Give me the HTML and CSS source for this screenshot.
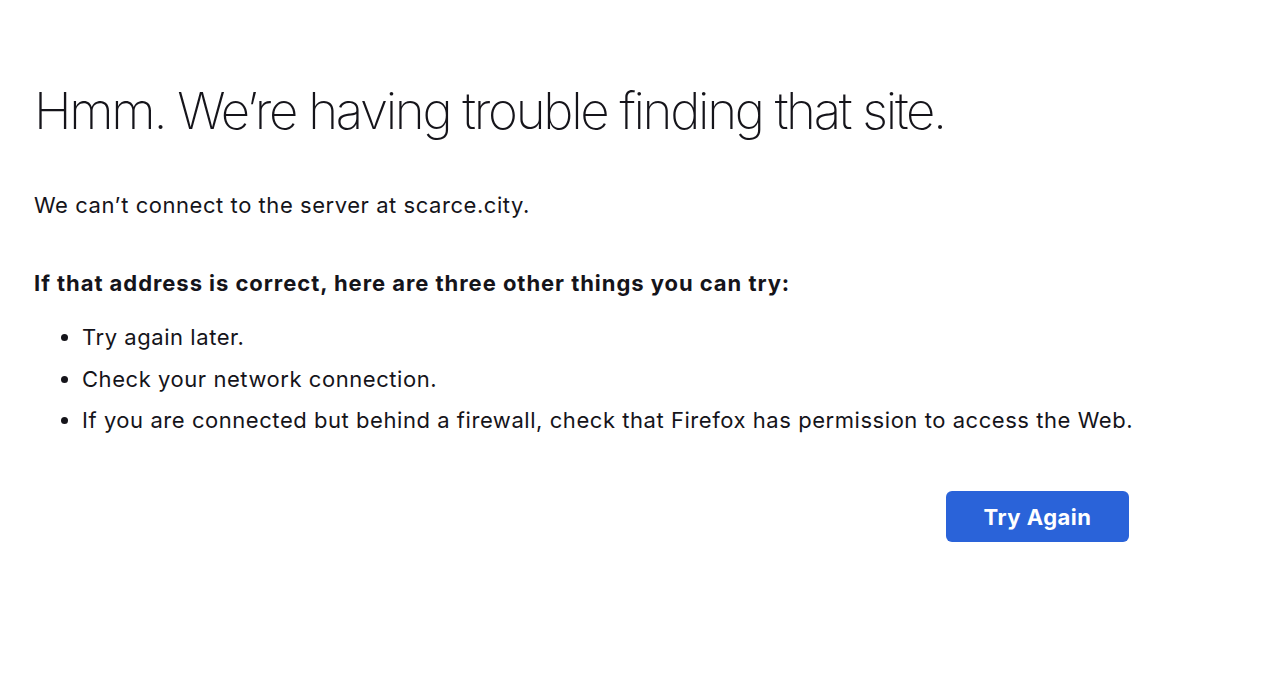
FILE: index.html
```html
<!DOCTYPE html>
<html lang="en">
<head>
<meta charset="utf-8">
<title>Problem loading page</title>
<link rel="stylesheet" href="styles.css">
</head>
<body>
<main class="container">
  <h1 class="title">Hmm. We’re having trouble finding that site.</h1>
  <p class="desc">We can’t connect to the server at scarce.city.</p>
  <p class="tips-head">If that address is correct, here are three other things you can try:</p>
  <ul class="tips">
    <li>Try again later.</li>
    <li>Check your network connection.</li>
    <li>If you are connected but behind a firewall, check that Firefox has permission to access the Web.</li>
  </ul>
  <div class="actions">
    <button class="btn">Try Again</button>
  </div>
</main>
</body>
</html>
```
FILE: styles.css
```css
html, body {
  margin: 0;
  padding: 0;
  background: #ffffff;
}
body {
  font-family: Inter, "Noto Sans", "Liberation Sans", sans-serif;
  color: #15141a;
}
.container {
  width: 1095px;
  padding: 74.5px 0 0 34px;
}
.title {
  margin: 0;
  font-size: 51px;
  font-weight: 200;
  letter-spacing: -2.3px;
  line-height: 72px;
  white-space: nowrap;
}
.desc {
  margin: 43.5px 0 0;
  font-size: 22px;
  letter-spacing: 0.55px;
  line-height: 30px;
}
.tips-head {
  margin: 48px 0 0;
  font-size: 22px;
  font-weight: 700;
  letter-spacing: 0.95px;
  line-height: 30px;
}
.tips {
  margin: 24px 0 0;
  padding-left: 48px;
  font-size: 22px;
  letter-spacing: 0.55px;
  line-height: 30px;
  white-space: nowrap;
}
.tips li {
  margin-bottom: 11.5px;
}
.tips li:last-child {
  margin-bottom: 0;
}
.actions {
  display: flex;
  justify-content: flex-end;
  margin-top: 56px;
}
.btn {
  width: 183px;
  height: 51px;
  border: none;
  border-radius: 6px;
  background: #2a63d9;
  color: #ffffff;
  font-family: inherit;
  font-size: 22px;
  font-weight: 700;
  letter-spacing: 0.5px;
}
```
